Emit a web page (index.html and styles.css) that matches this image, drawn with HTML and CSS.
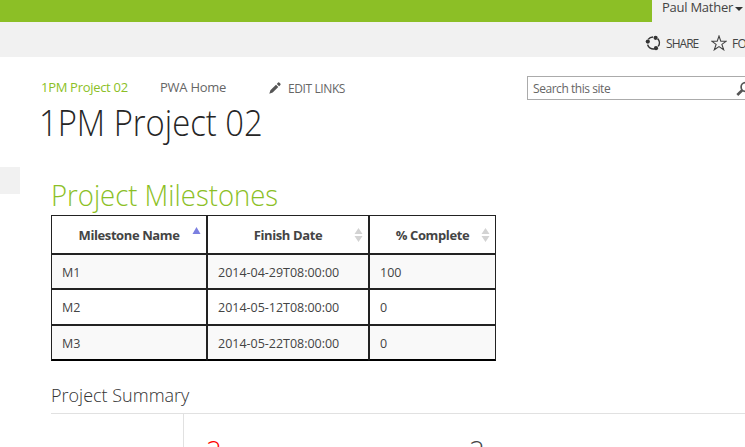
FILE: index.html
```
<!DOCTYPE html>
<html lang="en">
<head>
<meta charset="utf-8">
<title>1PM Project 02</title>
<link rel="stylesheet" href="styles.css">
</head>
<body>
<header class="suite-bar"><div class="user-menu"><span class="user-name">Paul Mather</span><span class="caret"></span></div></header>
<div class="ribbon">
  <svg class="share-icon" width="16" height="16" viewBox="0 0 16 16"><g fill="none" stroke="#333" stroke-width="1.5"><path d="M3.2 4.4A6 6 0 0 1 8 2M12.6 3.6A6 6 0 0 1 13.2 11.4M9.5 14A6 6 0 0 1 2.6 9.6"/></g><g fill="#333"><circle cx="2.8" cy="6.6" r="2.1"/><circle cx="10.6" cy="2.8" r="2.1"/><circle cx="11" cy="13.2" r="2.1"/></g></svg>
  <span class="ribbon-label share">SHARE</span>
  <svg class="star-icon" width="16" height="16" viewBox="0 0 16 16"><path d="M8 1 9.8 6.1 15.3 6.2 10.9 9.4 12.7 14.8 8 11.6 3.3 14.8 5.1 9.4.7 6.2 6.2 6.1Z" fill="none" stroke="#444" stroke-width="1.1"/></svg>
  <span class="ribbon-label follow">FOLLOW</span>
</div>
<div class="title-row">
  <nav class="top-nav">
    <a class="nav-current">1PM Project 02</a>
    <a class="nav-home">PWA Home</a>
    <svg class="pencil" width="12" height="12" viewBox="0 0 12 12"><path d="M.3 11.7 1.4 8.3 7 2.7 9.3 5 3.7 10.6ZM7.8 1.9 9.1.6Q9.8 0 10.5.7L11.3 1.5Q12 2.2 11.4 2.9L10.1 4.2Z" fill="#555"/></svg>
    <a class="nav-edit">EDIT LINKS</a>
  </nav>
  <div class="search"><span class="search-hint">Search this site</span><svg class="search-icon" width="16" height="16" viewBox="0 0 16 16"><circle cx="9.5" cy="6" r="4.4" fill="none" stroke="#555" stroke-width="1.7"/><path d="M6.2 9.2 1.3 14" stroke="#555" stroke-width="2.6"/></svg></div>
</div>
<h1><span class="title-text">1PM Project 02</span></h1>
<div class="body-row">
  <aside class="side-nav"></aside>
  <main>
    <h2><span class="milestones-text">Project Milestones</span></h2>
    <table>
      <colgroup><col class="c-name"><col class="c-date"><col class="c-done"></colgroup>
      <thead><tr>
        <th><div class="head"><span class="h-name">Milestone Name</span><svg class="sort active" width="9" height="14" viewBox="0 0 9 14"><path d="M4.5 0 8.5 7H.5Z" fill="#7b7fe0"/></svg></div></th>
        <th><div class="head"><span class="h-date">Finish Date</span><svg class="sort" width="9" height="14" viewBox="0 0 9 14"><path d="M4.5 0 8.5 6H.5ZM4.5 14 8.5 8H.5Z" fill="#d3d3d3"/></svg></div></th>
        <th><div class="head"><span class="h-done">% Complete</span><svg class="sort" width="9" height="14" viewBox="0 0 9 14"><path d="M4.5 0 8.5 6H.5ZM4.5 14 8.5 8H.5Z" fill="#d3d3d3"/></svg></div></th>
      </tr></thead>
      <tbody>
        <tr class="odd first"><td>M1</td><td><span class="stamp">2014-04-29T08:00:00</span></td><td>100</td></tr>
        <tr><td>M2</td><td><span class="stamp">2014-05-12T08:00:00</span></td><td>0</td></tr>
        <tr class="odd last"><td>M3</td><td><span class="stamp">2014-05-22T08:00:00</span></td><td>0</td></tr>
      </tbody>
    </table>
    <h3><span class="summary-text">Project Summary</span></h3>
    <section class="summary"><div class="summary-side"></div><div class="count late">2</div><div class="count">2</div></section>
  </main>
</div>
</body>
</html>
```
FILE: styles.css
```
* { box-sizing: border-box; }
html { overflow: hidden; }
body { margin: 0; width: 745px; height: 447px; overflow: hidden; background: #fff; color: #444; font: 13px/18px "Open Sans", "Noto Sans", sans-serif; white-space: nowrap; }
span, svg, a { display: block; flex: none; }
h1, h2, h3 { margin: 0; font-weight: 300; }
.suite-bar { height: 22px; background: #8cbf26; display: flex; justify-content: flex-end; }
.user-menu { width: 93px; height: 22px; background: #f1f1f1; display: flex; padding-left: 10px; line-height: 15px; }
.user-name { width: 70px; letter-spacing: -0.25px; }
.caret { width: 0; height: 0; margin: 7px 0 0 3px; border: 4px solid transparent; border-top-color: #333; border-bottom: 0; }
.ribbon { height: 35px; background: #f1f1f1; display: flex; padding: 13px 0 0 645px; overflow: hidden; }
.ribbon-label { font-size: 12px; line-height: 17px; }
.share { margin-left: 5px; width: 45px; letter-spacing: -0.95px; }
.follow { margin-left: 5px; letter-spacing: -0.6px; }
.title-row { height: 43px; display: flex; padding-top: 19px; }
.top-nav { width: 527px; flex: none; display: flex; padding: 2px 0 0 41px; color: #666; }
.nav-current { width: 119px; color: #8cbf26; letter-spacing: -0.3px; }
.nav-home { width: 109px; letter-spacing: -0.25px; }
.pencil { margin: 4px 7px 0 0; }
.nav-edit { font-size: 12px; margin-top: 2px; letter-spacing: -0.4px; }
.search { width: 240px; flex: none; height: 24px; border: 1px solid #ababab; display: flex; padding: 3px 0 0 5px; color: #666; line-height: 18px; }
.search-hint { width: 203px; font-size: 12px; letter-spacing: -0.45px; }
.search-icon { margin-top: 1px; }
h1 { height: 67px; padding-left: 39px; font-size: 36px; line-height: 45px; color: #262626; }
.title-text { transform: scaleX(.91); transform-origin: 0 0; }
.body-row { display: flex; }
.side-nav { width: 20px; height: 27px; background: #f1f1f1; flex: none; }
main { width: 725px; padding: 8px 0 0 31px; }
h2 { height: 40px; font-size: 29px; line-height: 40px; color: #8cbf26; }
.milestones-text { transform: scaleX(.948); transform-origin: 0 0; }
table { width: 445px; table-layout: fixed; border-collapse: separate; border-spacing: 0; }
.c-name { width: 156px; } .c-date { width: 162px; } .c-done { width: 127px; }
th, td { border: 1px solid #222; padding: 0; }
th { height: 39px; letter-spacing: -0.4px; }
.head { display: flex; justify-content: center; position: relative; }
.sort { position: absolute; right: 5px; top: 2px; }
.active { top: 1px; }
td { height: 36px; padding: 2px 0 0 10px; font-size: 12.5px; letter-spacing: -0.02px; }
.first td { height: 35px; }
.odd td { background: #f9f9f9; }
.last td { border-bottom: 2px solid #000; }
h3 { height: 52px; padding-top: 22px; font-size: 18px; line-height: 24px; color: #333; }
.summary { border-top: 1px solid #e1e1e1; height: 34px; display: flex; overflow: hidden; }
.summary-side { width: 133px; border-right: 1px solid #e1e1e1; }
.count { width: 263px; padding: 17px 0 0 22px; font-size: 28px; line-height: 38px; font-weight: 300; }
.late { color: #f00; }
```
